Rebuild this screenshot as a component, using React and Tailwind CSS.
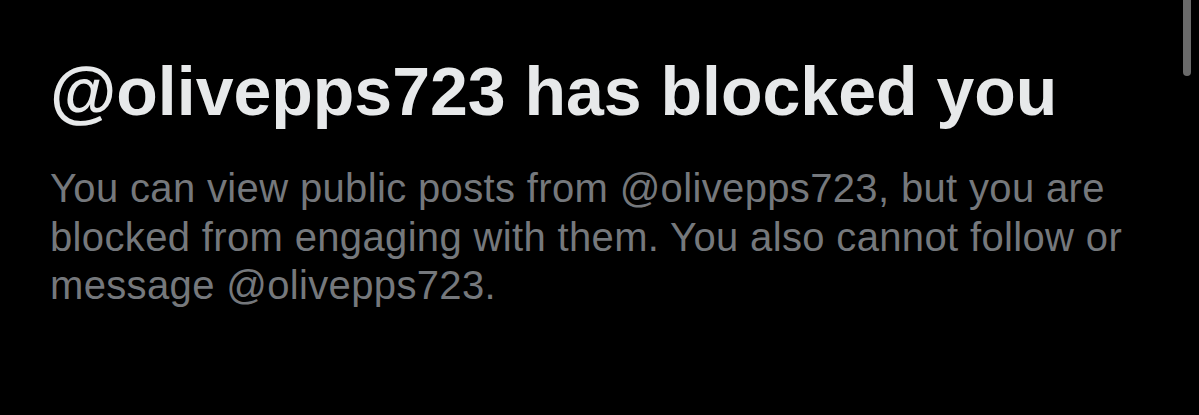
import React from "react"

const App = () => {
  return (
    <div className="relative h-[415px] w-full overflow-hidden bg-black font-['Liberation_Sans',Arial,sans-serif]">
      <div className="absolute right-[8px] top-0 h-[76px] w-[8px] rounded-b-full bg-[#6a6a6a]" />

      <div className="pl-[50px] pt-[51px]">
        <h1 className="text-[68px] font-bold leading-[80px] text-[#e7e9ea]">
          @olivepps723 has blocked you
        </h1>
        <p className="mt-[33px] w-[1110px] text-[40px] leading-[48.5px] tracking-[0.35px] text-[#75787c]">
          You can view public posts from @olivepps723, but you are blocked
          from engaging with them. You also cannot follow or message
          @olivepps723.
        </p>
      </div>
    </div>
  )
}

export default App
